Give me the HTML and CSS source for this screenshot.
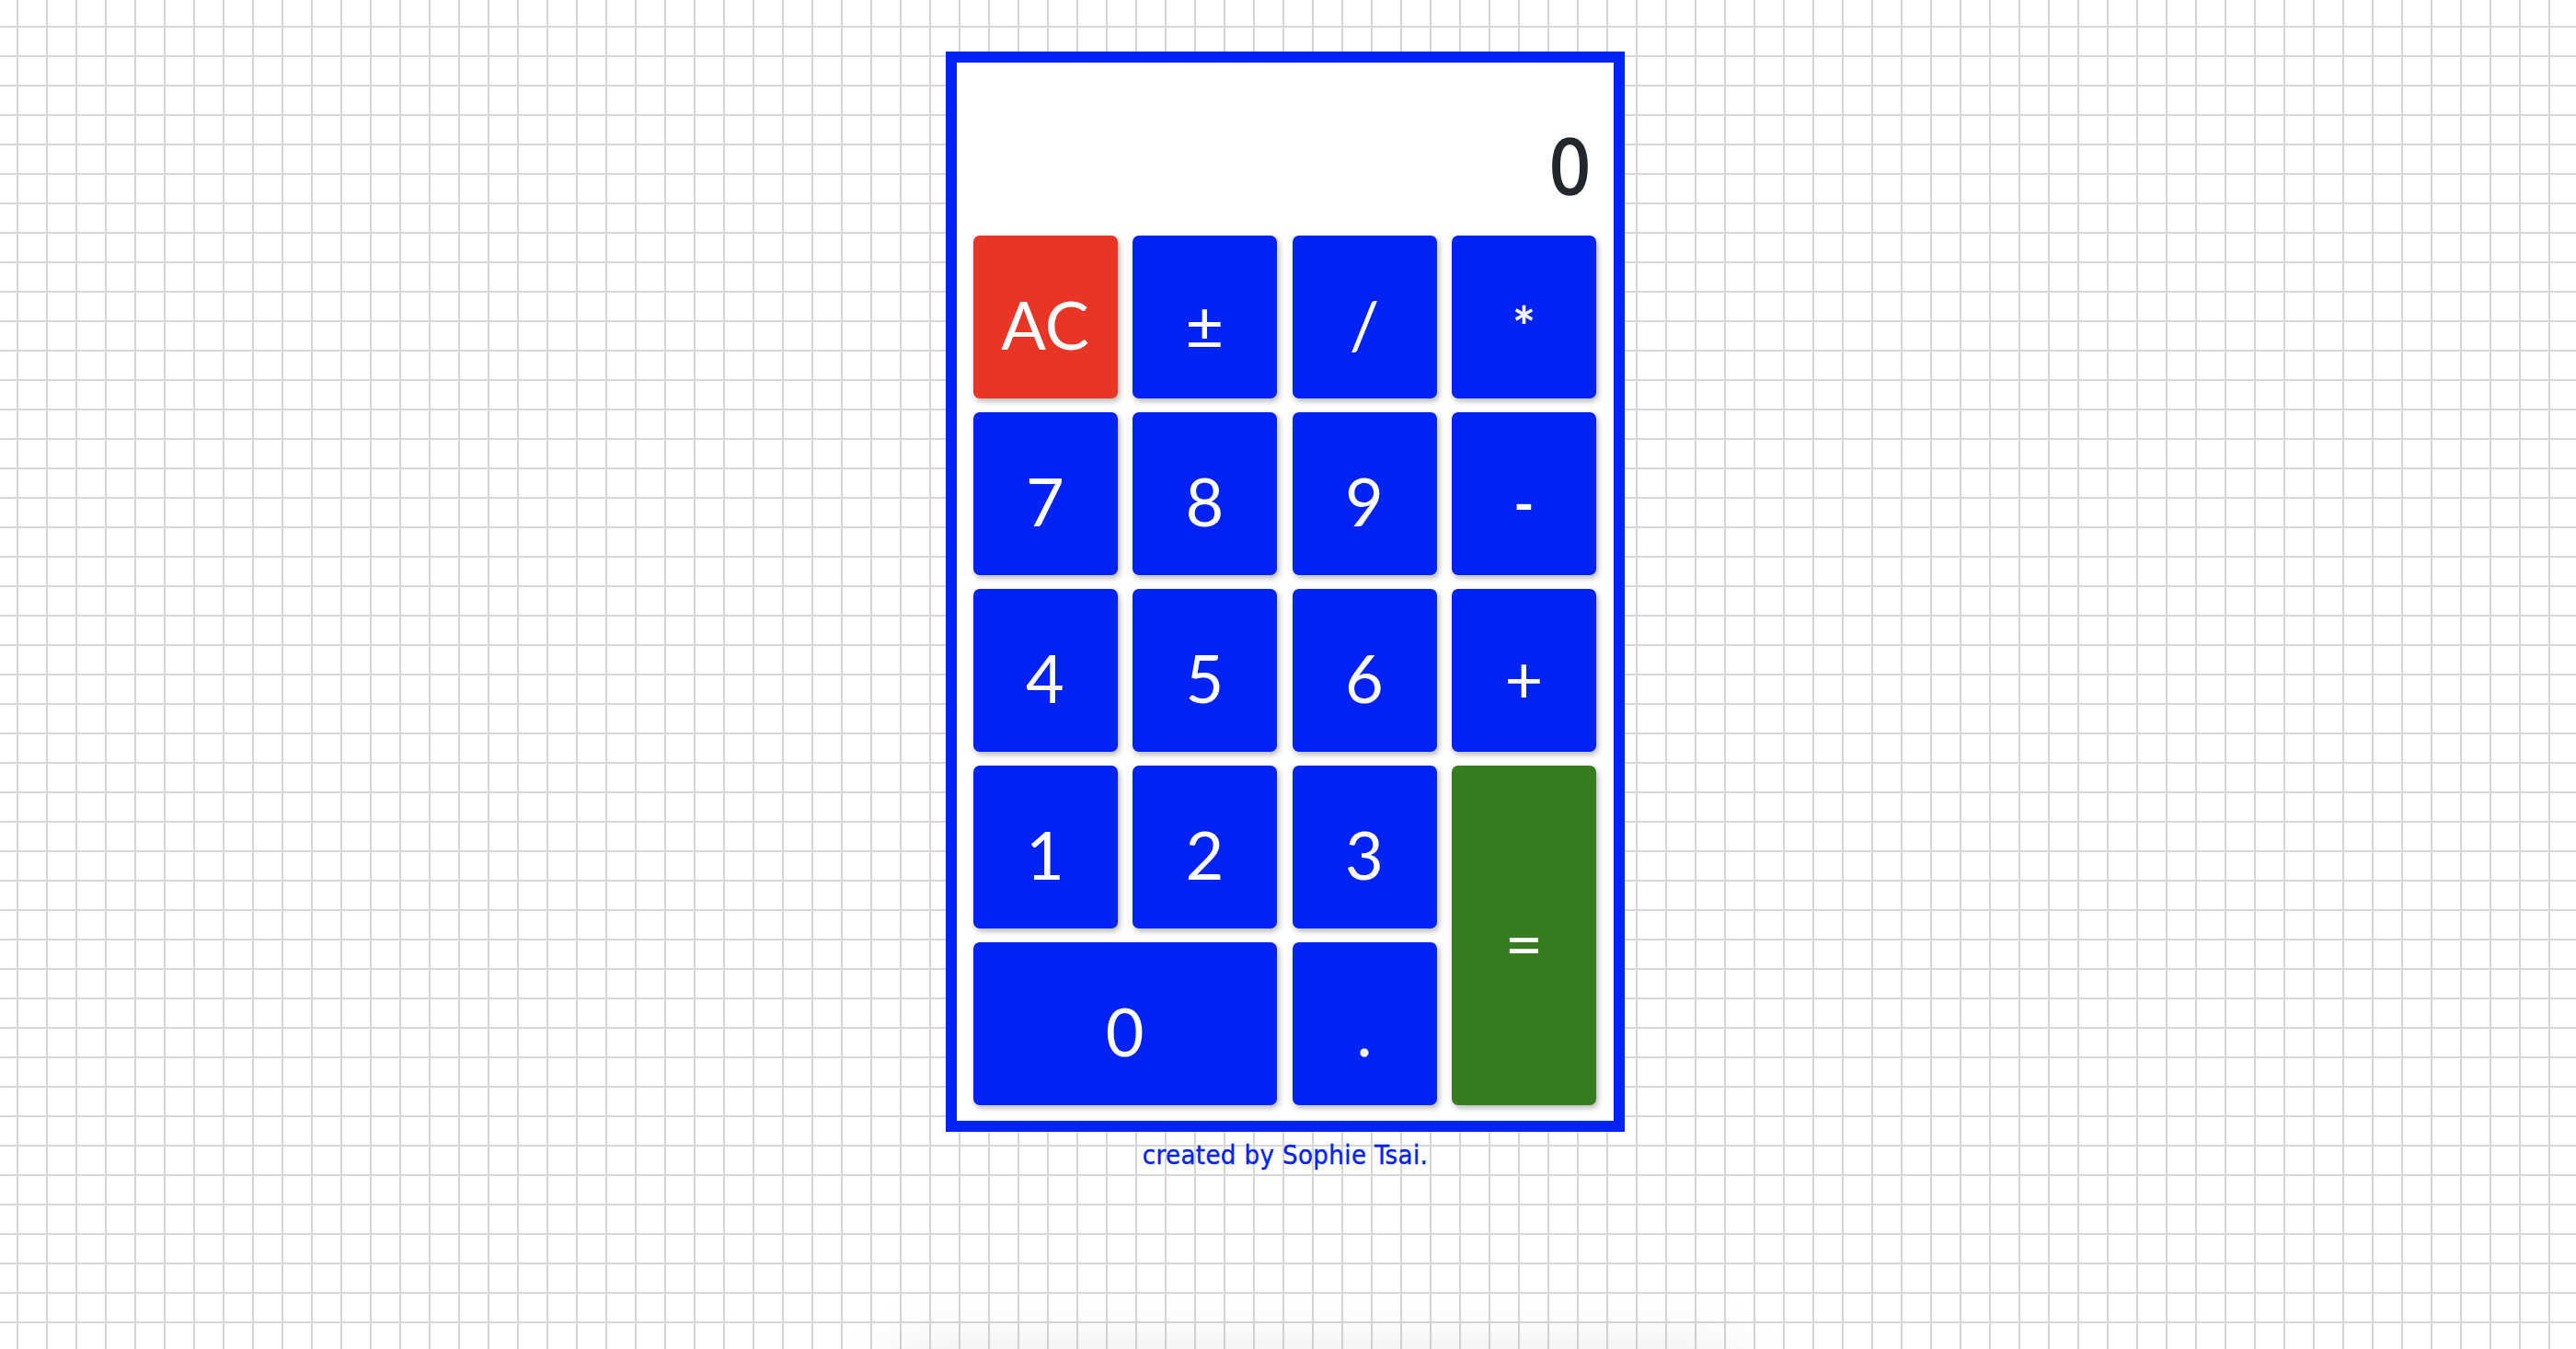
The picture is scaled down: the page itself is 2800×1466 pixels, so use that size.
FILE: index.html
```html
<!DOCTYPE html>
<html lang="en">
<head>
<meta charset="utf-8">
<title>Calculator</title>
<link rel="stylesheet" href="styles.css">
</head>
<body>
<main class="calc">
  <div class="display"><span class="value">0</span></div>
  <div class="keys">
    <button class="key key-clear">AC</button>
    <button class="key">±</button>
    <button class="key">/</button>
    <button class="key key-op-small">*</button>
    <button class="key">7</button>
    <button class="key">8</button>
    <button class="key">9</button>
    <button class="key key-op-small">-</button>
    <button class="key">4</button>
    <button class="key">5</button>
    <button class="key">6</button>
    <button class="key">+</button>
    <button class="key">1</button>
    <button class="key">2</button>
    <button class="key">3</button>
    <button class="key key-equals">=</button>
    <button class="key key-zero">0</button>
    <button class="key">.</button>
  </div>
</main>
<p class="credit">created by Sophie Tsai.</p>
<div class="floor-shadow"></div>
</body>
</html>
```
FILE: styles.css
```css
html, body {
  margin: 0;
  padding: 0;
}

body {
  min-height: 1466px;
  background-color: #ffffff;
  background-image:
    linear-gradient(to right, #d6d6d6 0, #d6d6d6 2px, transparent 2px),
    linear-gradient(to bottom, #d6d6d6 0, #d6d6d6 2px, transparent 2px);
  background-size: 32px 32px;
  background-position: 18px 28px;
  overflow: hidden;
}

.calc {
  box-sizing: border-box;
  width: 738px;
  margin: 56px 0 0 calc(50% - 372px);
  background: #ffffff;
  border: 12px solid #0022f2;
  padding: 0 19px 17px 17.5px;
}

.display {
  box-sizing: border-box;
  height: 188px;
  display: flex;
  align-items: flex-end;
  justify-content: flex-end;
  padding: 0 5px 32px 0;
}

.value {
  font-family: "DejaVu Sans Condensed", "DejaVu Sans", sans-serif;
  font-stretch: condensed;
  font-weight: 400;
  font-size: 82px;
  line-height: 1;
  color: #23272b;
  -webkit-text-stroke: 1.5px #23272b;
}

.keys {
  display: grid;
  grid-template-columns: repeat(4, 1fr);
  grid-auto-rows: 177px;
  column-gap: 16.5px;
  row-gap: 15px;
}

.key {
  box-sizing: border-box;
  border: none;
  margin: 0;
  border-radius: 7px;
  background: #0022f2;
  color: #ffffff;
  font-family: "Lato", "Open Sans", sans-serif;
  font-weight: 400;
  font-size: 72px;
  line-height: 1;
  padding: 14px 0 0 0;
  display: flex;
  align-items: center;
  justify-content: center;
  box-shadow: 2px 3px 6px rgba(0, 0, 0, 0.3);
}

.key-op-small {
  font-weight: 700;
  font-size: 60px;
  padding-top: 18px;
}

.key-clear {
  background: #e93525;
}

.key-equals {
  background: #387c22;
  grid-column: 4;
  grid-row: 4 / span 2;
}

.key-zero {
  grid-column: 1 / span 2;
}

.credit {
  width: 738px;
  margin: 9px 0 0 calc(50% - 372px);
  text-align: center;
  font-family: "DejaVu Sans Condensed", "DejaVu Sans", sans-serif;
  font-stretch: condensed;
  font-size: 29px;
  letter-spacing: 0.4px;
  line-height: 1.164;
  color: #0022f2;
  -webkit-text-stroke: 0.4px #0022f2;
}

.floor-shadow {
  width: 900px;
  height: 200px;
  margin: 208px 0 0 calc(50% - 420px);
  box-shadow: 0 0 70px 10px rgba(0, 0, 0, 0.09);
}
```
